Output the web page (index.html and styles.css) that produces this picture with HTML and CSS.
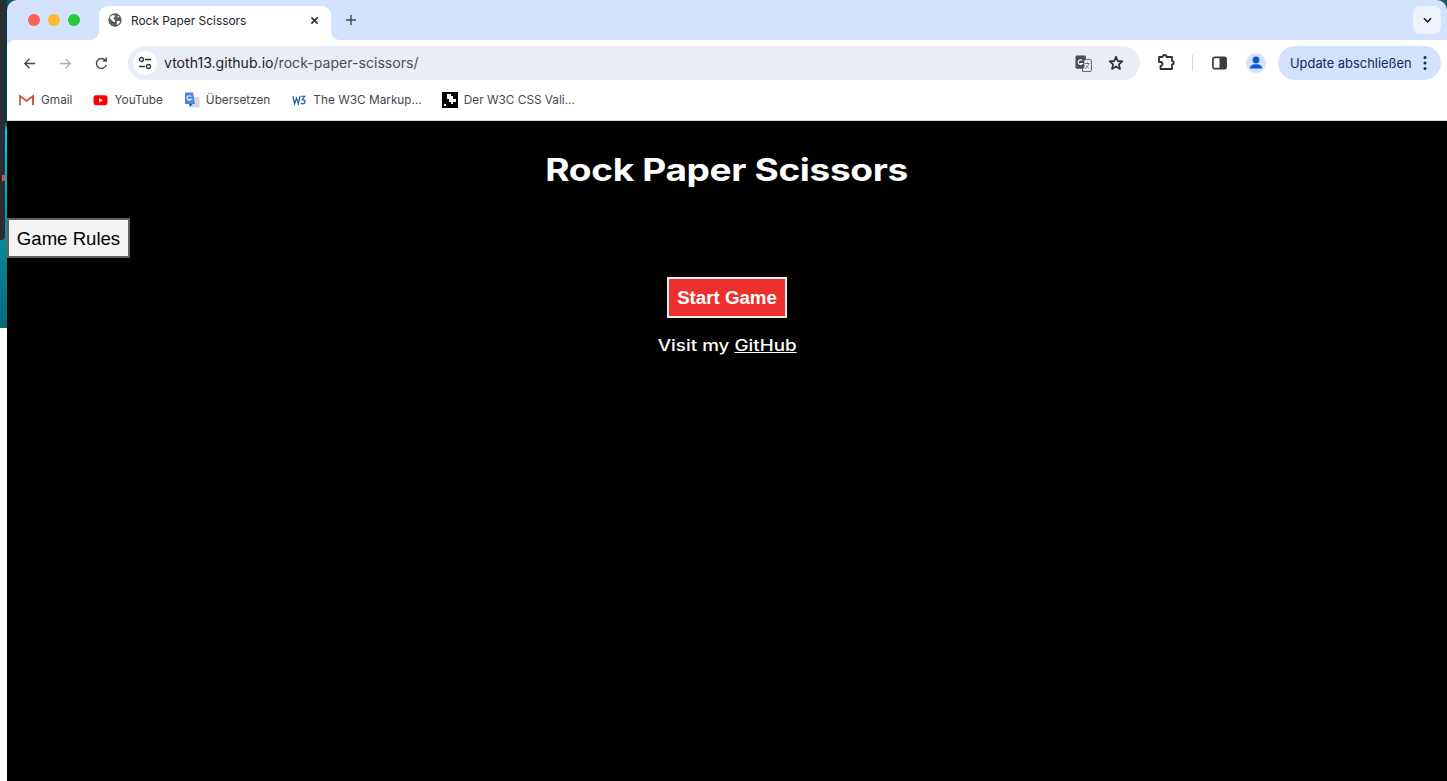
FILE: index.html
```html
<!DOCTYPE html>
<html lang="en">
<head>
<meta charset="utf-8">
<title>Rock Paper Scissors</title>
<link rel="stylesheet" href="styles.css">
</head>
<body>
<div class="desktop">
  <aside class="backdrop"><div class="panel"><span class="mark"></span></div></aside>
  <main class="window">
    <header class="chrome">
      <div class="tabstrip">
        <div class="lights"><span class="light red"></span><span class="light yellow"></span><span class="light green"></span></div>
        <div class="tab">
          <svg class="globe" viewBox="0 0 16 16"><circle cx="8" cy="8" r="7.6" fill="#5a5d62"/><path d="M3 3.500 7 2l1 2-2 2 2 2v2H6L2 6zM10 9h3l1 1-3 4-1-2zM11 2.500l2 2-2 1z" fill="#fff"/></svg>
          <span class="tab-title">Rock Paper Scissors</span>
          <svg class="tab-close" viewBox="0 0 10 10"><path d="M1.500 1.500l7 7M8.500 1.500l-7 7" stroke="#2b2d31" stroke-width="1.700" fill="none"/></svg>
        </div>
        <svg class="new-tab" viewBox="0 0 12 12"><path d="M6 1v10M1 6h10" stroke="#474a4f" stroke-width="1.400" fill="none"/></svg>
        <div class="tab-search"><svg viewBox="0 0 10 6" class="chev"><path d="M1 1l4 4 4-4" stroke="#1f2125" stroke-width="1.700" fill="none"/></svg></div>
      </div>
      <div class="toolbar">
        <svg class="nav first" viewBox="0 0 16 16"><path d="M14 8H3M8 3 3 8l5 5" stroke="#474a4f" stroke-width="1.500" fill="none"/></svg>
        <svg class="nav" viewBox="0 0 16 16"><path d="M2 8h11M8 3l5 5-5 5" stroke="#b0b2b6" stroke-width="1.500" fill="none"/></svg>
        <svg class="nav" viewBox="0 0 16 16"><path d="M13 9.500A5.300 5.300 0 1 1 12 4.500M13 1.500v4H9" stroke="#474a4f" stroke-width="1.500" fill="none"/></svg>
        <div class="omnibox">
          <span class="site-btn"><svg viewBox="0 0 14 14" class="tune"><circle cx="3.500" cy="3.500" r="2" fill="none" stroke="#303236" stroke-width="1.300"/><path d="M7 3.500h6M1 10.500h6" stroke="#303236" stroke-width="1.300"/><circle cx="10.500" cy="10.500" r="2" fill="none" stroke="#303236" stroke-width="1.300"/></svg></span>
          <span class="url"><span class="host">vtoth13.github.io</span>/rock-paper-scissors/</span>
          <svg class="translate" viewBox="0 0 18 18"><rect x="0.500" y="0.500" width="11" height="14" rx="1.500" fill="#4a4d51"/><path d="M8 5h8.500a.8.8 0 0 1 .8.8V16.500a.8.8 0 0 1-.8.8H8z" fill="#fff" stroke="#4a4d51"/><path d="M8 5h2v9H8z" fill="#4a4d51"/><path d="M7.700 5.800A2.500 2.500 0 1 0 8 9H5.500" stroke="#fff" stroke-width="1.200" fill="none"/><path d="M10.500 9h5M13 7.500v1.500M15 9c-1 3-2.500 4.500-4.500 5.500M11.500 10.500c1 2 2 3 3.500 3.500" stroke="#4a4d51" stroke-width=".8" fill="none"/></svg>
          <svg class="star" viewBox="0 0 16 16"><path d="M8 1.800l1.800 4.200 4.500.4-3.400 3 1 4.500L8 11.500 4.100 13.900l1-4.500-3.400-3 4.500-.4z" stroke="#303236" stroke-width="1.800" fill="none" stroke-linejoin="round"/></svg>
        </div>
        <svg class="extensions" viewBox="0 0 18 18"><path d="M2 4h3.500a2 2 0 0 1 4 0H15v4a1.700 1.700 0 0 1 0 3.400V16H3.500v-3a2 2 0 0 0 0-4H2z" transform="translate(0 -1)" stroke="#303236" stroke-width="1.800" fill="none" stroke-linejoin="round"/></svg>
        <span class="divider"></span>
        <svg class="sidepanel" viewBox="0 0 16 14"><rect x="1" y="1" width="14" height="12" rx="1.500" fill="#fff" stroke="#3a3c40" stroke-width="1.800"/><rect x="8" y="1" width="7" height="12" fill="#3a3c40"/></svg>
        <span class="avatar"><svg viewBox="0 0 20 20" class="person"><circle cx="10" cy="7" r="3.400" fill="#0b57d0"/><path d="M3.800 15.500c0-3 3-4.300 6.200-4.300s6.200 1.300 6.200 4.300z" fill="#0b57d0"/></svg></span>
        <div class="update"><span>Update abschließen</span><svg viewBox="0 0 4 16" class="kebab"><circle cx="2" cy="2.500" r="1.500"/><circle cx="2" cy="8" r="1.500"/><circle cx="2" cy="13.500" r="1.500"/></svg></div>
      </div>
      <nav class="bookmarks">
        <a class="bm gmail"><svg class="bm-ico" viewBox="0 0 16 12"><path d="M1 11.500V1.800L8 7l7-5.200v9.700" fill="none" stroke="#d9483b" stroke-width="2"/><path d="M1 11.500V3" stroke="#8a9fb5" stroke-width="1"/></svg>Gmail</a>
        <a class="bm youtube"><svg class="bm-ico" viewBox="0 0 16 12"><rect x="0.500" y="1" width="15" height="10.500" rx="2.500" fill="#f00"/><path d="M6.500 3.800v4.800L10.500 6.200z" fill="#fff"/></svg>YouTube</a>
        <a class="bm translate-bm"><svg class="bm-ico tall" viewBox="0 0 16 16"><path d="M8 5h7.500v10.500H8z" fill="#d5d7da"/><path d="M1 0.500h8l2 11.500H1z" fill="#4a86e8"/><path d="M8.500 12l-2.500 3.500L5 12z" fill="#2a56c6"/><path d="M7.200 4.600A2.300 2.300 0 1 0 7.300 7.300H5.300" stroke="#fff" stroke-width="1.100" fill="none"/></svg>Übersetzen</a>
        <a class="bm w3c"><svg class="bm-ico" viewBox="0 0 16 12"><path d="M1 2l1.800 8 2-6 2 6 1.700-8M9.500 2h4l-2.500 3.500c2 0 3 1 3 2.300a2.500 2.500 0 0 1-4.500 1.200" stroke="#1f5fa8" stroke-width="1.300" fill="none"/></svg>The W3C Markup...</a>
        <a class="bm validator"><svg class="bm-ico tall" viewBox="0 0 16 16"><rect width="16" height="16" fill="#000"/><path d="M5 2h4v2h2v3h3v3h-3v2H9v-2H7V7H5z" fill="#fff"/><rect x="2" y="12" width="2" height="2" fill="#fff"/></svg>Der W3C CSS Vali...</a>
      </nav>
    </header>
    <section class="page">
      <h1 class="game-title"><span class="title-wide">Rock Paper Scissors</span></h1>
      <button class="rules-btn">Game Rules</button>
      <div class="center">
        <button class="start-btn">Start Game</button>
        <p class="visit"><span class="visit-wide">Visit my <a class="gh">GitHub</a></span></p>
      </div>
    </section>
  </main>
</div>
</body>
</html>
```
FILE: styles.css
```css
* { box-sizing: border-box; }
html, body { margin: 0; height: 100%; overflow: hidden; }
body { background: #fff; font-family: "Liberation Sans", Arial, sans-serif; }
.desktop { display: flex; width: 1447px; height: 781px; }
.backdrop { width: 7px; height: 328px; flex: none; background: linear-gradient(#0a3b40 0 122px, #00d4dc 130px, #0a8a98 240px, #056a78 328px); }
.panel { width: 5px; height: 240px; background: #2b2d33; border-radius: 0 0 4px 0; padding-top: 175px; }
.mark { display: block; width: 3px; height: 6px; margin-left: 2px; background: #ee4444; }
.window { flex: 1; min-width: 0; display: flex; flex-direction: column; }
.chrome { height: 121px; flex: none; background: linear-gradient(#0a5a5f 0 12px, #d3e3fd 12px); border-bottom: 1px solid #d9d9d9; }
.tabstrip { height: 40px; background: #d3e3fd; display: flex; align-items: flex-end; padding-left: 21px; border-radius: 10px 10px 0 0; }
.lights { display: flex; gap: 8px; height: 34px; align-items: flex-start; padding-top: 8px; margin-right: 19px; }
.light { width: 12px; height: 12px; border-radius: 50%; }
.red { background: #ff5f57; } .yellow { background: #febc2e; } .green { background: #28c840; }
.tab { position: relative; width: 232px; height: 34px; background: #fff; border-radius: 9px 9px 0 0; display: flex; align-items: center; padding: 0 12px 6px 9px; color: #24262a; }
.tab::before, .tab::after { content: ""; position: absolute; bottom: 0; width: 8px; height: 8px; }
.tab::before { left: -8px; background: radial-gradient(circle at 0 0, transparent 7.5px, #fff 8px); }
.tab::after { right: -8px; background: radial-gradient(circle at 100% 0, transparent 7.5px, #fff 8px); }
.globe { width: 14px; height: 14px; flex: none; }
.tab-title { margin-left: 9px; flex: 1; font-family: Inter, "Liberation Sans", sans-serif; font-size: 11.900px; }
.tab-close { width: 9px; height: 9px; }
.new-tab { width: 12px; height: 12px; margin: 0 0 14px 14px; }
.tab-search { width: 28px; height: 28px; background: #edf2fd; border-radius: 7px; margin: 0 6px 6px auto; display: flex; align-items: center; justify-content: center; }
.chev { width: 9px; height: 6px; }
.toolbar { height: 46px; display: flex; align-items: center; padding: 0 6px 0 15px; background: #fff; border-radius: 8px 0 0 0; }
.nav { width: 15px; height: 15px; margin-right: 21px; flex: none; }
.omnibox { width: 1012px; height: 34px; margin-left: -2px; background: #e9eef6; border-radius: 17px; display: flex; align-items: center; padding: 0 16px 0 5px; flex: none; }
.site-btn { width: 24px; height: 24px; border-radius: 50%; background: #fff; display: flex; align-items: center; justify-content: center; flex: none; }
.tune { width: 14px; height: 14px; }
.url { margin-left: 7px; flex: 1; font-family: Inter, "Liberation Sans", sans-serif; font-size: 14.100px; line-height: 17px; margin-top: -2px; color: #4a4d52; }
.host { color: #1f2125; }
.translate { width: 17px; height: 17px; margin-right: 16px; }
.star { width: 16px; height: 16px; }
.extensions { width: 18px; height: 18px; margin-left: 17px; flex: none; }
.divider { width: 1px; height: 16px; background: #c5d6f2; margin: 0 19px 0 17px; flex: none; }
.sidepanel { width: 15px; height: 14px; flex: none; }
.avatar { width: 20px; height: 20px; border-radius: 50%; background: #d3e3fd; margin: 0 12px 0 19px; flex: none; }
.person { display: block; width: 20px; height: 20px; }
.update { width: 163px; height: 34px; border-radius: 17px; background: #d3e3fd; display: flex; align-items: center; justify-content: space-between; padding: 0 14px 0 12px; font-family: Inter, "Liberation Sans", sans-serif; font-size: 12.900px; color: #0f2a5c; white-space: nowrap; flex: none; }
.kebab { width: 4px; height: 16px; fill: #0f2a5c; flex: none; }
.bookmarks { height: 34px; display: flex; align-items: center; padding: 0 0 7px 12px; font-family: Inter, "Liberation Sans", sans-serif; font-size: 11.800px; color: #45484d; white-space: nowrap; background: #fff; }
.bm { display: flex; align-items: center; gap: 6px; }
.bm-ico { width: 15px; height: 12px; flex: none; }
.bm-ico.tall { width: 16px; height: 16px; }
.gmail { gap: 7px; margin-right: 21px; }
.youtube { margin-right: 21px; }
.translate-bm { margin-right: 22px; }
.w3c { margin-right: 20px; }
.page { flex: 1; background: #000; display: flex; flex-direction: column; align-items: flex-start; }
.title-wide { display: inline-block; transform: scaleX(1.196); }
.visit-wide { display: inline-block; transform: scaleX(1.214); }
.game-title { align-self: stretch; margin: 29px 0 0; text-align: center; font-family: Inter, sans-serif; font-weight: 700; font-size: 31px; line-height: 40px; color: #fff; letter-spacing: -0.3px; }
.rules-btn { margin-top: 28px; width: 123px; height: 40px; padding: 1px 0 0; border: 2px solid #626262; border-radius: 0; background: #f4f4f4; color: #000; font-family: "Liberation Sans", Arial, sans-serif; font-size: 18.600px; }
.center { align-self: stretch; display: flex; flex-direction: column; align-items: center; margin-top: 19px; }
.start-btn { width: 120px; height: 41px; padding: 0; border: 2px solid #eee; background: #ed302d; color: #fff; font-family: "Liberation Sans", Arial, sans-serif; font-weight: 700; font-size: 18.700px; }
.visit { margin: 17px 0 0; font-family: Inter, sans-serif; font-weight: 500; font-size: 15.500px; line-height: 22px; color: #fff; }
.gh { color: #fff; text-decoration: underline; }
```
